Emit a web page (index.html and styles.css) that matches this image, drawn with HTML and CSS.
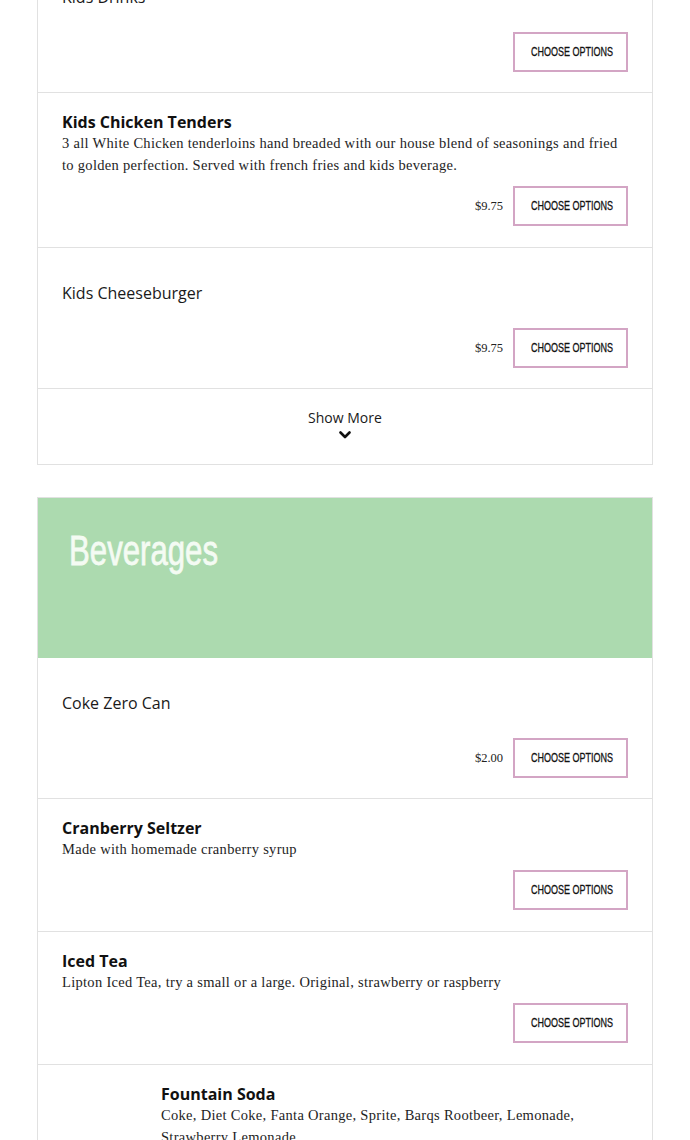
FILE: index.html
```html
<!DOCTYPE html>
<html lang="en">
<head>
<meta charset="utf-8">
<title>Menu</title>
<link rel="stylesheet" href="styles.css">
</head>
<body>
<main class="menu">
  <section class="card card-first">
    <div class="item item-plain">
      <div class="item-body">
        <h3 class="item-name item-name-regular">Kids Drinks</h3>
      </div>
      <div class="item-actions">
        <button class="btn"><span class="btn-label">CHOOSE OPTIONS</span></button>
      </div>
    </div>
    <div class="item">
      <div class="item-body">
        <h3 class="item-name">Kids Chicken Tenders</h3>
        <p class="item-desc">3 all White Chicken tenderloins hand breaded with our house blend of seasonings and fried to golden perfection. Served with french fries and kids beverage.</p>
      </div>
      <div class="item-actions">
        <span class="price">$9.75</span>
        <button class="btn"><span class="btn-label">CHOOSE OPTIONS</span></button>
      </div>
    </div>
    <div class="item item-plain">
      <div class="item-body">
        <h3 class="item-name item-name-regular">Kids Cheeseburger</h3>
      </div>
      <div class="item-actions">
        <span class="price">$9.75</span>
        <button class="btn"><span class="btn-label">CHOOSE OPTIONS</span></button>
      </div>
    </div>
    <div class="show-more">
      <span class="show-more-label">Show More</span>
      <svg class="chevron" width="12" height="8" viewBox="0 0 12 8" aria-hidden="true">
        <polyline points="1.5,1.5 6,6 10.5,1.5" fill="none" stroke="#111" stroke-width="2.6" stroke-linecap="round" stroke-linejoin="round"/>
      </svg>
    </div>
  </section>

  <section class="card">
    <header class="section-header">
      <h2 class="section-title"><span class="section-title-text">Beverages</span></h2>
    </header>
    <div class="item item-plain">
      <div class="item-body">
        <h3 class="item-name item-name-regular">Coke Zero Can</h3>
      </div>
      <div class="item-actions">
        <span class="price">$2.00</span>
        <button class="btn"><span class="btn-label">CHOOSE OPTIONS</span></button>
      </div>
    </div>
    <div class="item">
      <div class="item-body">
        <h3 class="item-name">Cranberry Seltzer</h3>
        <p class="item-desc">Made with homemade cranberry syrup</p>
      </div>
      <div class="item-actions">
        <button class="btn"><span class="btn-label">CHOOSE OPTIONS</span></button>
      </div>
    </div>
    <div class="item">
      <div class="item-body">
        <h3 class="item-name">Iced Tea</h3>
        <p class="item-desc">Lipton Iced Tea, try a small or a large. Original, strawberry or raspberry</p>
      </div>
      <div class="item-actions">
        <button class="btn"><span class="btn-label">CHOOSE OPTIONS</span></button>
      </div>
    </div>
    <div class="item item-media">
      <div class="item-thumb"></div>
      <div class="item-body">
        <h3 class="item-name">Fountain Soda</h3>
        <p class="item-desc">Coke, Diet Coke, Fanta Orange, Sprite, Barqs Rootbeer, Lemonade, Strawberry Lemonade</p>
      </div>
    </div>
  </section>
</main>
</body>
</html>
```

FILE: styles.css
```css
* {
  box-sizing: border-box;
}

html, body {
  margin: 0;
  padding: 0;
  background: #ffffff;
}

body {
  font-family: "Open Sans", "Liberation Sans", sans-serif;
  color: #111111;
  overflow: hidden;
}

.menu {
  padding: 0 37px;
}

.card {
  border: 1px solid #e1e1e1;
  background: #ffffff;
  margin-bottom: 32px;
}

.card-first {
  margin-top: -49px;
}

.item {
  padding: 19px 24px 21px;
  border-bottom: 1px solid #e1e1e1;
}

.item-plain {
  padding-top: 35px;
  padding-bottom: 20px;
}

.item-name {
  margin: 0;
  font-size: 16px;
  line-height: 20px;
  font-weight: 700;
  color: #111111;
}

.item-name-regular {
  font-weight: 400;
  color: #1a1a1a;
}

.item-body {
  margin-bottom: 10px;
}

.item-plain .item-body {
  margin-bottom: 25px;
}

.item-desc {
  margin: 0;
  font-family: "Liberation Serif", "DejaVu Serif", serif;
  font-size: 14.5px;
  letter-spacing: 0.3px;
  line-height: 22px;
  color: #1e1e1e;
}

.item-actions {
  display: flex;
  justify-content: flex-end;
  align-items: center;
  gap: 10px;
}

.price {
  font-family: "Liberation Serif", "DejaVu Serif", serif;
  font-size: 12.5px;
  color: #222222;
}

.btn {
  width: 115px;
  height: 40px;
  border: 2px solid #d3a5c4;
  background: #ffffff;
  padding: 0;
  font-family: "Liberation Sans", "Open Sans", sans-serif;
  font-size: 12.5px;
  color: #111111;
  cursor: pointer;
  white-space: nowrap;
  overflow: hidden;
  -webkit-text-stroke: 0.3px #111111;
}

.btn-label {
  display: inline-block;
  transform: scaleX(0.72);
  transform-origin: center;
}

.show-more {
  display: flex;
  flex-direction: column;
  align-items: center;
  padding: 19px 0 25px;
  gap: 3px;
}

.show-more-label {
  font-size: 14px;
  line-height: 20px;
  color: #1a1a1a;
}

.chevron {
  display: block;
}

.section-header {
  height: 160px;
  background: #acdaaf;
  padding: 27px 31px;
}

.section-title {
  margin: 0;
  font-family: "Liberation Sans", "Open Sans", sans-serif;
  font-weight: 400;
  font-size: 43px;
  line-height: 50px;
  color: #f4fbf3;
  white-space: nowrap;
  -webkit-text-stroke: 0.8px #f4fbf3;
}

.section-title-text {
  display: inline-block;
  transform: scaleX(0.725);
  transform-origin: left center;
}

.item-media {
  display: flex;
  gap: 24px;
  border-bottom: none;
}

.item-thumb {
  width: 75px;
  flex: none;
}

.item-media .item-body {
  flex: 1;
}
```
